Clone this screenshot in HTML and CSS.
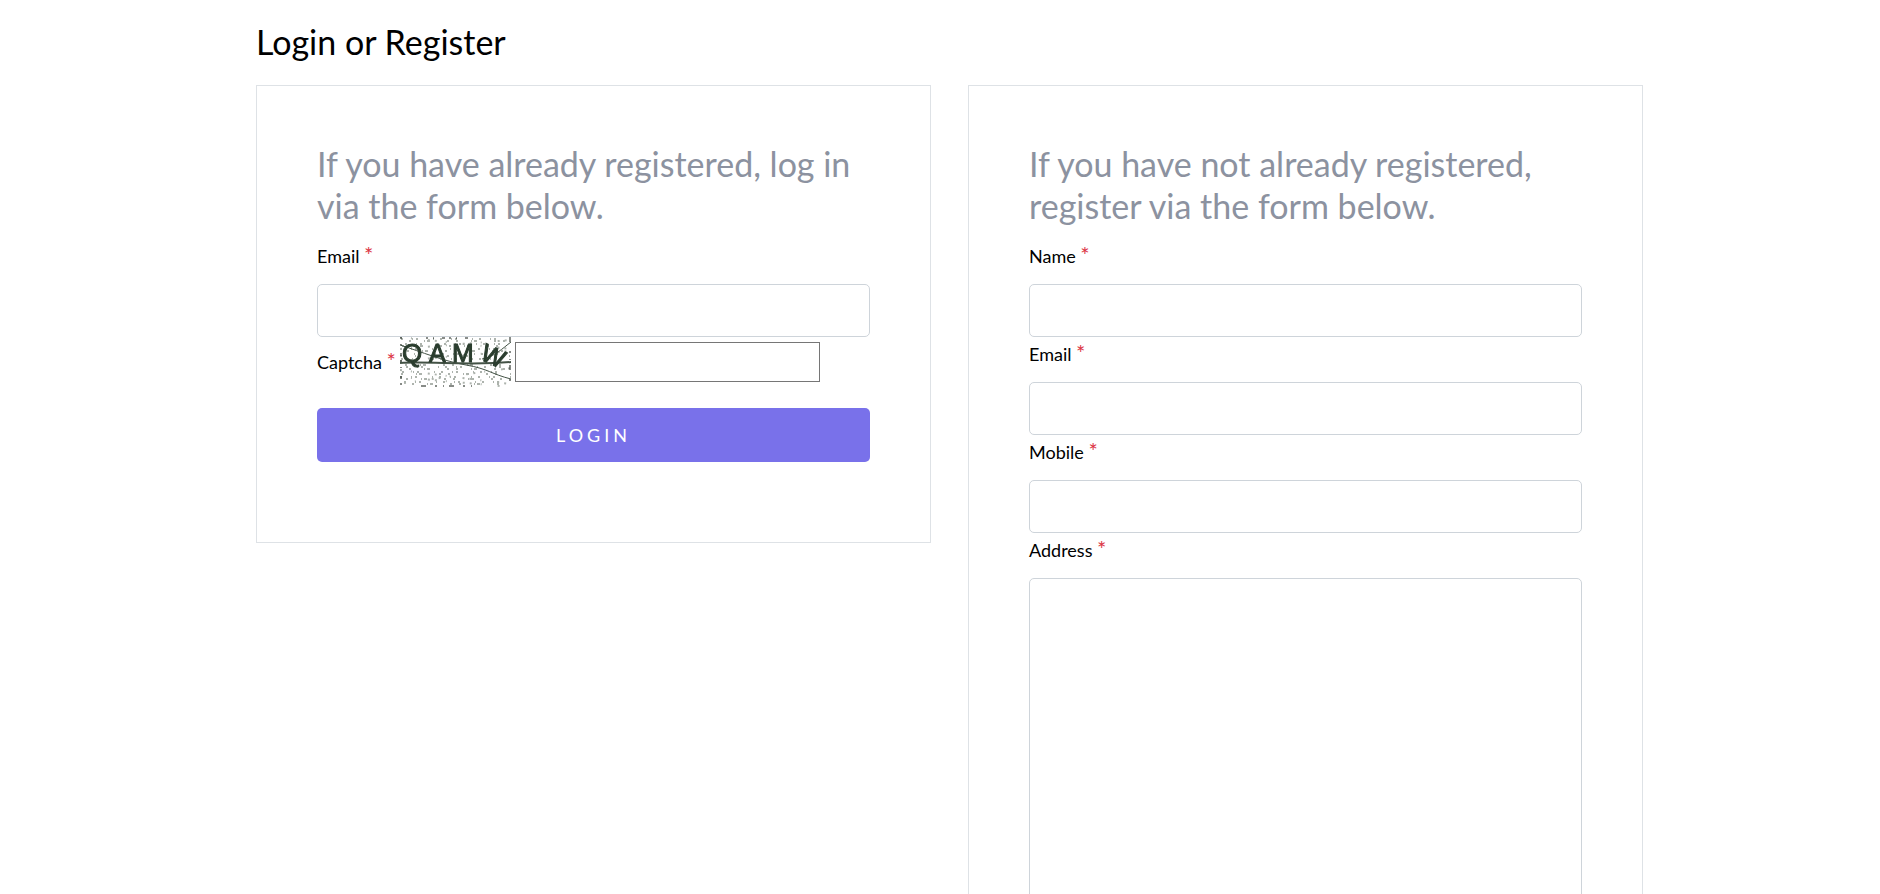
FILE: index.html
```
<!DOCTYPE html>
<html lang="en">
<head>
<meta charset="utf-8">
<meta name="viewport" content="width=device-width, initial-scale=1">
<title>Login or Register</title>
<link rel="stylesheet" href="styles.css">
</head>
<body>
<main class="page">
  <h1 class="page-title">Login or Register</h1>
  <div class="columns">
    <form class="card">
      <h2 class="card-title">If you have already registered, log in via the form below.</h2>
      <label class="label" for="login-email">Email <span class="required">*</span></label>
      <input class="field" id="login-email" type="email" required>
      <div class="captcha">
        <label class="captcha-label" for="captcha">Captcha <span class="required">*</span></label>
        <svg class="captcha-image" viewBox="0 0 111 50" role="img" aria-label="Captcha code">
          <g class="noise">
            <path stroke-dasharray="2 9 1 3 2 15 1 6" d="M1 2H110M5 7H111M0 12H109M3 17H111M1 22H111M6 30H111M2 35H110M0 40H111M4 45H108"/>
            <path stroke-dasharray="2 13 1 2 3 17 2 7" d="M9 4H111M2 9H111M7 14H109M0 19H111M5 28H111M9 32H111M1 37H111M6 42H111M12 47H100"/>
            <path stroke-dasharray="2 9 1 16 2 5" d="M0 0L111 12M0 12L111 3M0 24L111 14M0 33L111 47M4 46L111 31M0 40L100 49"/>
          </g>
          <g class="edge">
            <path stroke-dasharray="2 5 1 8 3 4" d="M1 0V49M26 1H70"/>
            <path stroke-dasharray="5 9 2 6 1 5" d="M110 0V47M21 49H76"/>
          </g>
          <g class="strokes">
            <path d="M0 8C22 15 43 24 66 28S91 37 111 42"/>
            <path d="M0 26C30 24 70 29 111 25" stroke-width="2"/>
            <path d="M82 22C94 20 103 11 111 5"/>
          </g>
          <g class="letters">
            <text x="2" y="25" font-size="26">Q</text>
            <text x="29" y="25" font-size="25">A</text>
            <text x="52" y="25" font-size="26">M</text>
            <text x="79" y="22" font-size="25" transform="rotate(24 79 22)">W</text>
          </g>
        </svg>
        <input class="captcha-field" id="captcha" type="text" required>
      </div>
      <button class="submit" type="submit">LOGIN</button>
    </form>
    <form class="card">
      <h2 class="card-title">If you have not already registered, register via the form below.</h2>
      <label class="label" for="name">Name <span class="required">*</span></label>
      <input class="field" id="name" type="text" required>
      <label class="label" for="email">Email <span class="required">*</span></label>
      <input class="field" id="email" type="email" required>
      <label class="label" for="mobile">Mobile <span class="required">*</span></label>
      <input class="field" id="mobile" type="tel" required>
      <label class="label" for="address">Address <span class="required">*</span></label>
      <textarea class="field address" id="address" required></textarea>
    </form>
  </div>
</main>
</body>
</html>
```
FILE: styles.css
```
* { box-sizing: border-box; }
body {
  margin: 0;
  background: #fff;
  color: #000;
  font: 18px/34px Lato, "Noto Sans", sans-serif;
}
.page { padding: 21px 237px 60px 256px; }
.page-title {
  margin: 0 0 22px;
  font-size: 34px;
  line-height: 42px;
  font-weight: 400;
}
.columns {
  display: grid;
  grid-template-columns: 1fr 1fr;
  gap: 37px;
  align-items: start;
}
.card {
  padding: 57px 60px 80px;
  border: 1px solid #dee2e6;
}
.card-title {
  margin: 0 0 12px;
  color: #8c92a0;
  font-size: 34px;
  line-height: 42px;
  font-weight: 400;
}
.label { display: block; margin-bottom: 11px; }
.required { color: #dc3545; font-size: 22px; line-height: 22px; }
.field {
  display: block;
  width: 100%;
  height: 53px;
  padding: 8px 16px;
  border: 1px solid #ced4da;
  border-radius: 5px;
  background: #fff;
  font: inherit;
}
.address { height: 400px; resize: none; }
.captcha {
  display: flex;
  align-items: center;
  gap: 4px;
  margin-bottom: 21px;
}
.captcha-image { flex: none; width: 111px; height: 50px; }
.noise { fill: none; stroke: #8b948b; stroke-width: 2; opacity: .7; filter: blur(.4px); }
.edge { fill: none; stroke: #101810; stroke-width: 1; }
.strokes { fill: none; stroke: #435245; stroke-width: 1; }
.letters {
  fill: #2a3d2e;
  stroke: #2a3d2e;
  stroke-width: 1;
  font-family: "Liberation Sans", sans-serif;
  filter: blur(.4px);
}
.captcha-field {
  width: 305px;
  min-width: 0;
  height: 40px;
  padding: 1px 2px;
  border: 1px solid #767676;
  background: #fff;
  font: inherit;
}
.submit {
  display: block;
  width: 100%;
  height: 54px;
  border: 0;
  border-radius: 5px;
  background: #7971ea;
  color: #fff;
  font: inherit;
  letter-spacing: 4px;
}
```
